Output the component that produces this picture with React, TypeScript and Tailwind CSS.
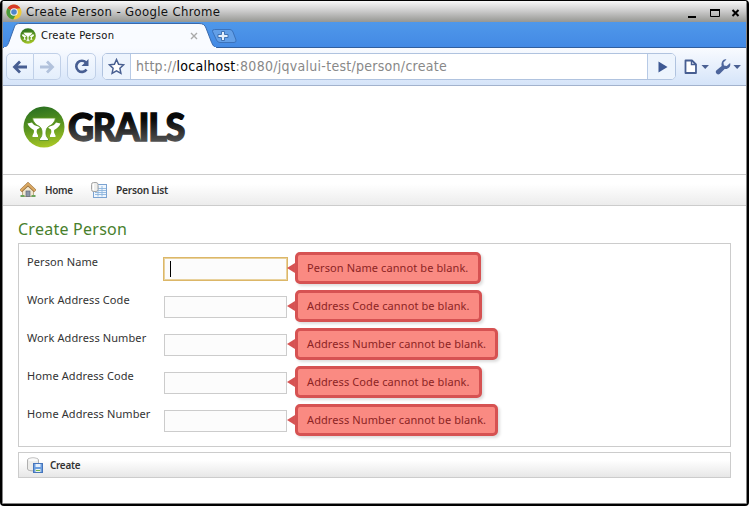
import React from "react";

const ERRORS = [
  { label: "Person Name", msg: "Person Name cannot be blank.", w: "w-[186px]", focus: true },
  { label: "Work Address Code", msg: "Address Code cannot be blank.", w: "w-[187px]" },
  { label: "Work Address Number", msg: "Address Number cannot be blank.", w: "w-[203px]" },
  { label: "Home Address Code", msg: "Address Code cannot be blank.", w: "w-[187px]" },
  { label: "Home Address Number", msg: "Address Number cannot be blank.", w: "w-[203px]" },
];

function ChromeLogo() {
  return (
    <svg width="16" height="16" viewBox="0 0 16 16" className="shrink-0">
      <circle cx="8" cy="8" r="7.6" fill="#ecc93a" />
      <path d="M8 8 1.400 4.200A7.600 7.600 0 0 1 14.400 4.200L8 5z" fill="#d63a28" />
      <path d="M1.400 4.200A7.600 7.600 0 0 0 7.200 15.500L10.500 9.500 8 8z" fill="#4a9b3c" />
      <circle cx="8" cy="8" r="3.800" fill="#f4f6f8" />
      <circle cx="8" cy="8" r="2.800" fill="#4d85cb" />
    </svg>
  );
}

function GrailsMark({ size, id }: { size: number; id: string }) {
  return (
    <svg width={size} height={size} viewBox="0 0 42 42" className="shrink-0">
      <defs>
        <linearGradient id={id} x1="0.4" y1="0" x2="0.6" y2="1">
          <stop offset="0" stopColor="#2a7020" />
          <stop offset="0.5" stopColor="#5c961f" />
          <stop offset="1" stopColor="#aac826" />
        </linearGradient>
      </defs>
      <circle cx="21" cy="21" r="20.500" fill={`url(#${id})`} />
      <g fill="#fff">
        <path d="M4.500 17.500 9 16.500C10 18.500 12.500 20.200 16.500 20.700V22L14 23.500C13.300 26 13.600 27 15 29.500V31H9.500V29.500C11 27 11.200 26 10.800 24C8 22.500 5.500 20.500 4.500 17.500Z" />
        <path d="M37.500 17.500 33 16.500C32 18.500 29.500 20.200 25.500 20.700V22L28 23.500C28.700 26 28.400 27 27 29.500V31H32.500V29.500C31 27 30.800 26 31.200 24C34 22.500 36.500 20.500 37.500 17.500Z" />
        <path d="M9.500 12H32.500C32 16 29.500 18.800 25.500 20.500C22.500 22.500 22.600 28 23.600 30.500L25.500 33V34.500H16.500V33L18.400 30.500C19.400 28 19.500 22.500 16.500 20.500C12.500 18.800 10 16 9.500 12Z" stroke="#5c961f" strokeWidth="0.900" />
      </g>
    </svg>
  );
}

function HomeIcon() {
  return (
    <svg width="16" height="16" viewBox="0 0 16 16" className="shrink-0">
      <path d="M2.500 8 8 3l5.500 5v6.500h-11z" fill="#f0e8d2" stroke="#b49b6b" strokeWidth="0.800" />
      <path d="M.8 9 8 2.200l7.200 6.800" fill="none" stroke="#99703f" strokeWidth="3.400" />
      <path d="M.8 8.800 8 2l7.200 6.800" fill="none" stroke="#dba963" strokeWidth="2" />
      <rect x="6" y="9" width="4" height="5.500" fill="#8c96a8" stroke="#62697a" strokeWidth="0.700" />
      <path d="M.5 13h4v2h-4zM11.500 13h4v2h-4z" fill="#6ba45e" />
    </svg>
  );
}

function ListIcon() {
  return (
    <svg width="16" height="16" viewBox="0 0 16 16" className="shrink-0">
      <rect x="2.500" y="2.500" width="13" height="13" fill="#eff6fd" stroke="#7ba3d2" />
      <path d="M4 6.500h11M4 8.500h11M4 10.500h11M4 12.500h11M7 4v10.500M11 4v10.500" stroke="#8db5de" strokeWidth="0.900" />
      <rect x="0.500" y="0.500" width="6.500" height="9" rx="2" fill="#eeeeec" stroke="#a4a4a4" />
      <path d="M2.500 2v6" stroke="#fff" strokeWidth="1.200" />
    </svg>
  );
}

function SaveIcon() {
  return (
    <svg width="16" height="16" viewBox="0 0 16 16" className="shrink-0">
      <path d="M.5 3C.5.200 11.500.200 11.500 3v9c0 2.500-11 2.500-11 0z" fill="#ececea" stroke="#b0b0b0" />
      <ellipse cx="6" cy="2.700" rx="4.600" ry="1.500" fill="#fafafa" />
      <rect x="6.500" y="6.500" width="9" height="9" fill="#6d9fe0" stroke="#4675bb" />
      <path d="M8.500 7h5v3h-5z" fill="#e4effc" />
      <path d="M8.500 12h5v3h-5z" fill="#eef6ea" />
      <path d="M9 13.500h4" stroke="#71b64e" />
    </svg>
  );
}

function BrowserButton({ children, className }: { children: React.ReactNode; className: string }) {
  return (
    <div className={`flex h-[27px] items-center justify-center border border-[#c0d0e8] bg-gradient-to-b from-[#f5f9ff] to-[#e3eefc] ${className}`}>
      {children}
    </div>
  );
}

function TitleBar() {
  return (
    <div className="flex h-[21px] items-center bg-gradient-to-b from-[#f8f8f8] via-[#c9c9c9] to-[#969793] pr-[4px] pl-[3px]">
      <ChromeLogo />
      <span className="ml-[4px] font-['DejaVu_Sans_Condensed','DejaVu_Sans',sans-serif] text-[13px] leading-[20px] tracking-[0.35px] whitespace-nowrap text-[#111]">Create Person - Google Chrome</span>
      <svg width="56" height="14" viewBox="0 0 56 14" className="ml-auto">
        <path d="M2 12h8" stroke="#000" strokeWidth="2" />
        <path d="M24.500 4.500h9v7h-9z" fill="none" stroke="#000" />
        <path d="M24 5h10" stroke="#000" strokeWidth="2" />
        <path d="m46.500 5 6 6m0-6-6 6" stroke="#000" strokeWidth="2" />
      </svg>
    </div>
  );
}

function TabStrip() {
  return (
    <div className="relative h-[26px] bg-gradient-to-b from-[#4f98ea] to-[#4389e4]">
      <svg width="743" height="26" viewBox="0 0 743 26" className="absolute inset-0">
        <path d="M0 25.500h743" stroke="#315f9e" />
        <path d="M0 26C4 25 5 23 7 17L11 6C12 3 13 1.500 17 1.500H196C200 1.500 202 3 203 6L208 19C210 24 211 25 214 26Z" fill="#f9fbff" stroke="#3b69aa" />
        <path d="M1 25.500h212" stroke="#f9fbff" />
        <path d="M209.500 9.500Q209 7.500 211.500 7.500H227Q229 7.500 230 10L233 18Q233.500 20.500 231 20.500H217Q214.500 20.500 213.500 18Z" fill="#639fe7" stroke="#3b72bb" />
        <path d="M218.500 9.500h3v3h3.500v3h-3.500v3h-3v-3H215v-3h3.500z" fill="#e5effb" stroke="#376aab" strokeWidth="0.900" />
        <path d="m188 11 6 6m0-6-6 6" stroke="#aaa" strokeWidth="1.400" />
      </svg>
      <div className="relative flex h-[26px] items-center pt-[2px] pl-[17px]">
        <GrailsMark size={16} id="favicon" />
        <span className="ml-[5px] font-['DejaVu_Sans',sans-serif] text-[10px] leading-[14px] tracking-[0.25px] whitespace-nowrap text-[#111]">Create Person</span>
      </div>
    </div>
  );
}

function Toolbar() {
  return (
    <div className="flex h-[38px] items-center border-b border-[#a2b2cd] bg-gradient-to-b from-[#f9fbff] to-[#d5e4f9] pl-[3px]">
      <BrowserButton className="w-[28px] rounded-l-[5px]">
        <svg width="16" height="16" viewBox="0 0 16 16" fill="none" stroke="#475e92" strokeWidth="2.800"><path d="M15 8H3M8 2.500 2.500 8 8 13.500" /></svg>
      </BrowserButton>
      <BrowserButton className="w-[27px] rounded-r-[5px] border-l-0">
        <svg width="16" height="16" viewBox="0 0 16 16" fill="none" stroke="#b2c2dc" strokeWidth="2.800"><path d="M1 8h12M8 2.500 13.500 8 8 13.500" /></svg>
      </BrowserButton>
      <BrowserButton className="ml-[6px] w-[29px] rounded-[5px]">
        <svg width="17" height="17" viewBox="0 0 17 17"><path d="M13 4.500A5.600 5.600 0 1 0 13.500 11.500" fill="none" stroke="#475e92" strokeWidth="2.600" /><path d="M15.500 1v7H8.500z" fill="#475e92" /></svg>
      </BrowserButton>
      <div className="ml-[6px] flex h-[27px] w-[575px] overflow-hidden rounded-[5px] border border-[#b0c3df] bg-white">
        <div className="flex w-[28px] items-center justify-center border-r border-[#b7cae6] bg-[#edf4fd]">
          <svg width="17" height="17" viewBox="0 0 17 17"><path d="m8.500 1.500 2.100 4.700 5.100.6-3.800 3.500 1 5-4.400-2.500-4.400 2.500 1-5L1.300 6.800l5.100-.6z" fill="#fff" stroke="#485f91" strokeWidth="1.500" /></svg>
        </div>
        <span className="ml-[5px] font-['DejaVu_Sans_Condensed','DejaVu_Sans',sans-serif] text-[14px] leading-[25px] tracking-[0.28px] whitespace-nowrap text-[#888]">http://<span className="text-black">localhost</span>:8080/jqvalui-test/person/create</span>
        <div className="ml-auto flex w-[28px] items-center justify-center border-l border-[#b7cae6] bg-[#edf4fd]">
          <svg width="10" height="12" viewBox="0 0 10 12" className="ml-[3px]"><path d="M.5.500 9.500 6 .5 11.500z" fill="#3d5893" /></svg>
        </div>
      </div>
      <svg width="66" height="20" viewBox="0 0 66 20" className="ml-[4px]">
        <path d="M5.500 3.500h6.500l4 4v8.500h-10.500z" fill="#fff" stroke="#475e92" strokeWidth="1.800" strokeLinejoin="round" />
        <path d="M11.500 3.500v4h4" fill="none" stroke="#475e92" strokeWidth="1.400" />
        <path d="M21.500 8h7.500l-3.750 4zM53.500 8h7.500l-3.750 4z" fill="#4a6093" />
        <path d="M46.500 2.500 43.500 5.500l.5 3 2.800.5 3.400-3c1 3.800-2 6.600-5.500 6l-5 5c-2.200 1.600-5-1.200-3.400-3.400l5.400-4.600C41 5 43.500 1.500 46.500 2.500z" fill="#4d659c" />
      </svg>
    </div>
  );
}

export default function App() {
  return (
    <div className="flex h-[506px] w-[749px] flex-col overflow-hidden rounded-[4px] border-x-2 border-t border-b-2 border-black bg-white font-['Noto_Sans',sans-serif]">
      <div className="flex min-h-0 flex-1 flex-col border-x border-b border-[#858585]">
        <TitleBar />
        <TabStrip />
        <Toolbar />
        <header className="flex h-[88px] items-center pb-[6px] pl-[20px]">
          <GrailsMark size={42} id="brand" />
          <svg width="140" height="60" viewBox="0 0 140 60" className="ml-[2px]">
            <defs>
              <linearGradient id="word" gradientUnits="userSpaceOnUse" x1="0" y1="16" x2="0" y2="46"><stop offset="0.2" stopColor="#080808" /><stop offset="1" stopColor="#555" /></linearGradient>
            </defs>
            <text x="1" y="44" textLength="116" lengthAdjust="spacingAndGlyphs" fill="url(#word)" stroke="url(#word)" strokeWidth="1.300" className="font-['Lato','Open_Sans',sans-serif] text-[38px] font-black tracking-[-1.5px]">GRAILS</text>
          </svg>
        </header>
        <nav className="flex h-[32px] items-center border-y border-[#ccc] bg-gradient-to-b from-white from-30% to-[#ececec] pl-[17px] text-[11px] font-semibold text-[#333]">
          <HomeIcon />
          <span className="ml-[9px] w-[46px]"><span className="inline-block origin-left scale-x-90 tracking-[-0.3px]">Home</span></span>
          <ListIcon />
          <span className="ml-[9px] inline-block origin-left scale-x-[0.93] tracking-[-0.3px]">Person List</span>
        </nav>
        <main className="px-[15px] pt-[12px]">
          <h1 className="h-[25px] text-[16px] leading-[22px] tracking-[0.25px] text-[#48802c]">Create Person</h1>
          <section className="h-[204px] w-[713px] border border-[#ccc] pt-[8px] pl-[8px]">
            {ERRORS.map((row, i) => (
              <div key={i} className="flex h-[38px] text-[11px] text-[#333]">
                <label className="w-[137px] leading-[20px] tracking-[0.1px]">{row.label}</label>
                <div className={row.focus ? "mt-[5px] -ml-px flex h-[24px] w-[125px] items-center border border-[#dcb768] bg-[#fcfcfc] pl-[6px] shadow-[inset_0_0_0_1px_#e9d29d]" : "mt-[6px] h-[22px] w-[123px] border border-[#ccc] bg-[#fcfcfc]"}>
                  {row.focus && <i className="h-[16px] w-px bg-black" />}
                </div>
                <svg width="8" height="10" viewBox="0 0 8 10" className={row.focus ? "mt-[11px] -ml-px" : "mt-[11px]"}><path d="M0 5 8 0v10z" fill="#d65252" /></svg>
                <div className={`flex h-[32px] items-center rounded-[5px] border-[3px] border-[#d65252] bg-[#fa8a82] pl-[9px] tracking-[0.1px] whitespace-nowrap text-[#8c2424] shadow-[2px_2px_3px_#ddd] ${row.w}`}>{row.msg}</div>
              </div>
            ))}
          </section>
          <div className="mt-[5px] flex h-[26px] w-[713px] items-center border border-[#ccc] bg-gradient-to-b from-white from-30% to-[#e7e7e7] pl-[8px] text-[11px] font-semibold text-[#333]">
            <SaveIcon />
            <span className="ml-[7px] inline-block origin-left scale-x-90 tracking-[-0.3px]">Create</span>
          </div>
        </main>
      </div>
    </div>
  );
}
